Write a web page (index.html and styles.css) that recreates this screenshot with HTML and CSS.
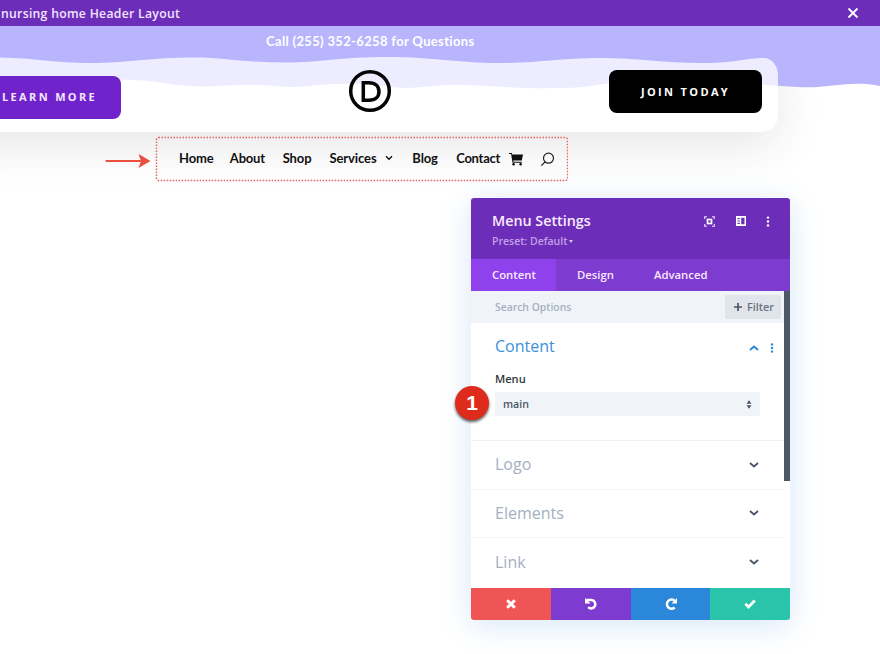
FILE: index.html
```
<!DOCTYPE html>
<html lang="en">
<head>
<meta charset="utf-8">
<title>Header Layout</title>
<link rel="stylesheet" href="styles.css">
</head>
<body>
<header class="topbar"><span class="layout-name">nursing home Header Layout</span>
<svg class="close" width="12" height="12" viewBox="0 0 12 12"><path d="M1.500 1.500l9 9M10.500 1.500l-9 9"/></svg></header>
<main class="canvas">
<section class="hero">
<svg class="waves" width="880" height="106" viewBox="0 26 880 106">
<path fill="#b9b5fd" d="M0 26H880V86C862 82 846 84 828 86C806 89 789 86 765 85C720 83 650 80 605 84C590 86 582 88 560 88C510 89 490 85 455 85C430 85 425 88 405 88C390 88 386 84 360 84C325 83 310 87 290 87C270 86 263 84 240 85C215 86 195 88 170 84C150 80 130 79 100 80H0Z"/>
<path class="veil" d="M0 57.500C35 58 55 63 90 63C128 63 150 57.500 195 57.500C225 57.500 240 62.500 285 62.500C320 62.500 340 57 388 57C435 57 455 63 500 63C540 63 560 58 600 58C640 58 660 63 705 63C735 63 746 58 764 58C772 58 778 66 778 75V114Q778 132 760 132H0Z"/>
</svg>
<p class="phone">Call (255) 352-6258 for Questions</p>
<div class="card">
<a class="btn learn">LEARN MORE</a>
<svg class="logo" width="44" height="44" viewBox="0 0 44 44"><circle cx="22" cy="22" r="19.300"/><path d="M15.300 13.700H21C27 13.700 31 17 31 22.500S27 31.300 21 31.300H15.300Z"/></svg>
<a class="btn join">JOIN TODAY</a>
</div>
</section>
<div class="nav-row">
<svg class="arrow" width="46" height="16" viewBox="0 0 46 16"><path d="M1.500 8H36" stroke="#ea4f40" stroke-width="2.200" stroke-linecap="round"/><path fill="#ea4f40" d="M33.500 1L45.500 8L33.500 15L36 8Z"/></svg>
<nav class="menu">
<svg class="outline" width="413" height="46" viewBox="0 0 413 46"><rect x="1.500" y="1.500" width="411" height="43" rx="2"/></svg>
<a class="home">Home</a><a class="about">About</a><a class="shop">Shop</a><a class="services">Services</a><svg class="drop" width="8" height="6" viewBox="0 0 8 6"><path d="M1 1.300l3 3 3-3"/></svg><a class="blog">Blog</a><a class="contact">Contact</a>
<svg class="cart" width="15" height="14" viewBox="0 0 15 14"><path fill="#111" d="M0 1H2.800L3.300 2.400H14L12.800 8.600H4.300L4.500 9.700H12.800V10.700H3.500L2.100 2H0Z"/><circle cx="4.600" cy="12.300" r="1.200"/><circle cx="11.600" cy="12.300" r="1.200"/></svg>
<svg class="search" width="15" height="15" viewBox="0 0 15 15"><circle cx="8.500" cy="6.200" r="5"/><path d="M5 10L1.300 13.700"/></svg>
</nav>
</div>
</main>
<aside class="panel">
<div class="panel-head">
<div><h1>Menu Settings</h1><p class="preset">Preset: Default <i></i></p></div>
<div class="tools">
<svg width="11" height="11" viewBox="0 0 11 11"><path d="M.7 3V.7H3M8 .7H10.300V3M10.300 8V10.300H8M3 10.300H.7V8" fill="none" stroke="#f5ddff" stroke-width="1.100"/><rect x="3.500" y="3.500" width="4" height="4" fill="none" stroke="#fff" stroke-width="1.700"/></svg>
<svg width="10" height="10" viewBox="0 0 10 10"><path fill="#fff" fill-rule="evenodd" d="M0 0H10V10H0ZM5.200 1.700V8.300H8.500V1.700ZM1.500 2V3.200H3.800V2ZM1.500 4.400V5.600H3.800V4.400ZM1.500 6.800V8H3.800V6.800Z"/></svg>
<svg width="4" height="11" viewBox="0 0 4 11" fill="#fff"><circle cx="2" cy="1.600" r="1.200"/><circle cx="2" cy="5.500" r="1.200"/><circle cx="2" cy="9.400" r="1.200"/></svg>
</div>
</div>
<div class="tabs"><span class="tab active">Content</span><span class="tab design">Design</span><span class="tab advanced">Advanced</span></div>
<div class="panel-body">
<div class="options">
<div class="searchbar"><span>Search Options</span><span class="filter"><svg width="8" height="8" viewBox="0 0 8 8"><path d="M4 0V8M0 4H8"/></svg>Filter</span></div>
<section class="open">
<div class="open-title"><h2>Content</h2><span class="open-icons"><svg class="chev" width="10" height="6" viewBox="0 0 10 6"><path d="M1 5L5 1.500 9 5"/></svg><svg width="4" height="10" viewBox="0 0 4 10" fill="#2b87da"><circle cx="2" cy="1.400" r="1.200"/><circle cx="2" cy="5" r="1.200"/><circle cx="2" cy="8.600" r="1.200"/></svg></span></div>
<label>Menu</label>
<div class="select"><span>main</span><svg width="6" height="9" viewBox="0 0 6 9"><path fill="#4c5866" d="M.5 3.700L3 .3 5.500 3.700ZM.5 5.300H5.500L3 8.700Z"/></svg></div>
</section>
<div class="row"><h2>Logo</h2><svg class="chev" width="10" height="6" viewBox="0 0 10 6"><path d="M1 1L5 4.500 9 1"/></svg></div>
<div class="row"><h2>Elements</h2><svg class="chev" width="10" height="6" viewBox="0 0 10 6"><path d="M1 1L5 4.500 9 1"/></svg></div>
<div class="row"><h2>Link</h2><svg class="chev" width="10" height="6" viewBox="0 0 10 6"><path d="M1 1L5 4.500 9 1"/></svg></div>
</div>
<div class="scroll"></div>
</div>
<footer class="actions">
<span class="cancel"><svg width="12" height="12" viewBox="0 0 12 12"><path stroke-width="3" d="M2.200 2.200l7.600 7.600M9.800 2.200L2.200 9.800"/></svg></span>
<span class="undo"><svg width="14" height="14" viewBox="0 0 14 14"><path stroke-width="2.500" d="M2.500 3H7.500A4.200 4.200 0 1 1 4.200 10.200"/><path fill="#fff" stroke="none" d="M1 1V6.500H6.500Z"/></svg></span>
<span class="redo"><svg width="14" height="14" viewBox="0 0 14 14"><path stroke-width="2.500" d="M10.900 4.100A4.600 4.600 0 1 0 10.700 10.500"/><path fill="#fff" stroke="none" d="M13 1V6.500H7.500Z"/></svg></span>
<span class="save"><svg width="12" height="10" viewBox="0 0 12 10"><path stroke-width="2.700" d="M1.300 4.800L4.500 8 10.800 1.500"/></svg></span>
</footer>
<span class="marker">1</span>
</aside>
</body>
</html>
```
FILE: styles.css
```
* { box-sizing: border-box; }
body { margin: 0; width: 880px; height: 654px; overflow: hidden; background: #fff; font-family: "Open Sans", sans-serif; position: relative; }
h1, h2, p { margin: 0; }
svg { display: block; flex: none; }
.topbar { height: 26px; background: #6c2eb9; color: #f3e5ff; display: flex; align-items: center; justify-content: space-between; padding: 0 21px 0 1px; font-size: 12.200px; letter-spacing: .3px; font-weight: 600; white-space: nowrap; }
.close path { fill: none; stroke: #fff; stroke-width: 1.800; }
.hero { position: relative; height: 106px; }
.waves { position: absolute; left: 0; top: 0; }
.veil { fill: #fff; fill-opacity: .76; }
.phone { position: relative; height: 32px; padding-left: 266px; color: #fff; font: 700 13px/31px Lato, sans-serif; letter-spacing: .34px; white-space: nowrap; }
.card { position: relative; width: 778px; height: 74px; padding-right: 16px; display: flex; justify-content: space-between; border-radius: 0 20px 20px 0; background: linear-gradient(transparent 31px, #fff 31px); }
.card::before { content: ""; position: absolute; z-index: -1; left: -50px; right: 0; top: 0; height: 74px; border-radius: 20px; box-shadow: 0 12px 48px rgba(40, 40, 55, .12); }
.btn { height: 43px; line-height: 43px; border-radius: 8px; color: #fff; font-size: 11px; font-weight: 700; letter-spacing: 2.350px; white-space: nowrap; }
.learn { width: 121px; height: 43px; line-height: 42px; margin-top: 18px; padding-left: 2px; border-radius: 0 8px 8px 0; background: #7022cb; color: #f5e6ff; }
.join { width: 153px; margin-top: 12px; padding-left: 32px; background: #000; }
.logo { margin: 11px 0 0 9px; fill: none; stroke: #050505; stroke-width: 3.500; }
.nav-row { display: flex; align-items: flex-start; padding: 4px 0 0 105px; position: relative; }
.arrow { margin: 17px 4px 0 0; }
.menu { position: relative; width: 413px; height: 46px; padding: 2px 13px 4px 24px; display: flex; align-items: center; font: 700 13px/18px Lato, sans-serif; letter-spacing: -.1px; color: #111; white-space: nowrap; }
.outline { position: absolute; left: 0; top: 0; fill: none; stroke: #e5635f; stroke-width: 1.400; stroke-dasharray: 1.500 1.500; }
.home { width: 51px; }
.about { width: 53px; letter-spacing: -.2px; }
.shop { width: 47px; }
.services { width: 56px; }
.drop { margin-right: 19px; }
.drop path { fill: none; stroke: #111; stroke-width: 1.400; }
.blog { width: 44px; }
.contact { width: 53px; letter-spacing: -.25px; }
.cart { margin-top: 1px; }
.search { margin: 2px 0 0 16px; fill: none; stroke: #222; stroke-width: 1.200; }
.panel { position: absolute; left: 471px; top: 198px; width: 319px; height: 422px; border-radius: 3px; background: #fff; box-shadow: 0 5px 30px rgba(43, 135, 218, .2); }
.panel-head { height: 61px; padding: 13px 20px 0 21px; display: flex; justify-content: space-between; border-radius: 3px 3px 0 0; background: #6c2eb9; }
h1 { font-size: 14.300px; line-height: 20px; font-weight: 600; color: #fbeaff; white-space: nowrap; }
.preset { margin-top: 2px; font-size: 10.500px; line-height: 16px; font-weight: 600; color: #c3a0e8; white-space: nowrap; }
.preset i { display: inline-block; margin: 0 0 2px -1px; border: 2.500px solid transparent; border-top: 3px solid #d8bdf2; border-bottom: 0; }
.tools { height: 20px; display: flex; align-items: center; }
.tools svg:nth-child(2) { margin: 0 20px 0 21px; }
.tabs { height: 32px; display: flex; background: #7e3bd0; color: #fae9ff; font-size: 11.300px; line-height: 31px; font-weight: 600; }
.tab { padding-left: 21px; }
.active { width: 85px; background: #8f42ec; }
.design { width: 77px; }
.advanced { padding-left: 21px; }
.panel-body { height: 297px; display: flex; }
.options { flex: 1; }
.scroll { width: 6px; height: 190px; background: #4c5866; }
.searchbar { height: 32px; padding: 0 3px 0 24px; display: flex; align-items: center; justify-content: space-between; background: #f0f4f9; color: #a6b0c0; font-size: 10.400px; font-weight: 600; }
.searchbar > span:first-child { padding-bottom: 1px; }
.filter { width: 56px; height: 24px; padding: 0 0 1px 9px; display: flex; align-items: center; gap: 5px; border-radius: 2px; background: #dfe5eb; color: #677382; font-size: 10.800px; }
.filter path { stroke: #4c5866; stroke-width: 1.700; }
.open { height: 118px; padding: 11px 10px 0 24px; border-bottom: 1px solid #eff2f5; }
.open-title { height: 25px; display: flex; align-items: center; justify-content: space-between; }
.open-icons { display: flex; align-items: center; gap: 11px; margin-top: 2px; }
h2 { font-size: 16px; line-height: 25px; font-weight: 400; color: #a5b0c1; }
.open h2 { color: #3d91da; }
.chev path { fill: none; stroke: #4c5866; stroke-width: 1.900; }
.open .chev path { stroke: #2b87da; }
label { display: block; margin: 11px 0 5px; line-height: 17px; font-size: 11.100px; font-weight: 600; color: #32373c; }
.select { width: 265px; height: 24px; padding: 0 8px; display: flex; align-items: center; justify-content: space-between; background: #f0f3f8; color: #4c5866; font-size: 10.600px; font-weight: 600; }
.select span { padding-bottom: 1px; }
.row { height: 48.500px; padding: 0 25px 0 24px; display: flex; align-items: center; justify-content: space-between; border-bottom: 1px solid #f3f5f7; }
.row:last-child { border: 0; }
.actions { height: 32px; display: grid; grid-template-columns: 80px 80px 79px 80px; border-radius: 0 0 3px 3px; overflow: hidden; }
.actions span { display: flex; align-items: center; justify-content: center; }
.actions svg { fill: none; stroke: #fff; }
.cancel { background: #ef5555; }
.undo { background: #7e3bd0; }
.redo { background: #2b87da; }
.save { background: #29c4a9; }
.marker { position: absolute; left: -16px; top: 188px; width: 34px; height: 34px; border-radius: 50%; background: #df2b1b; box-shadow: 0 2px 3px rgba(0, 0, 0, .65); color: #fff; font: 700 21px/34px "Liberation Sans", sans-serif; text-align: center; }
```
